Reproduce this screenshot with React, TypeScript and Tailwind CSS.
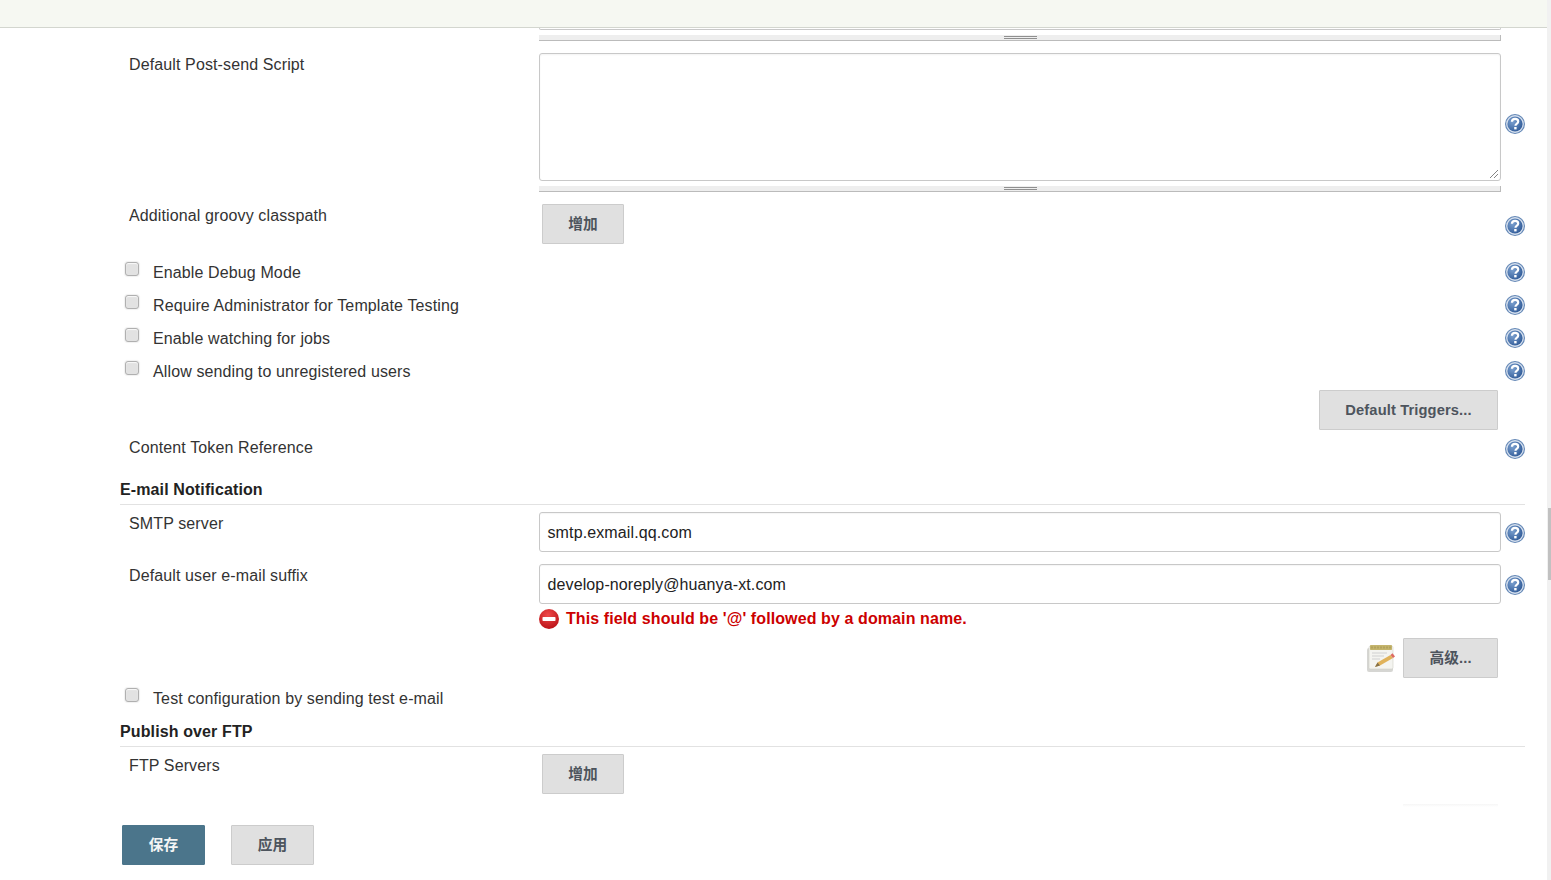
const fontStack = "font-['Liberation_Sans','Noto_Sans_CJK_SC',sans-serif]";

function HelpIcon({ className = "" }: { className?: string }) {
  return (
    <svg className={`h-5 w-5 shrink-0 ${className}`} viewBox="0 0 20 20">
      <defs>
        <radialGradient id="helpFill" cx="35%" cy="35%" r="75%">
          <stop offset="0%" stopColor="#7ba0cf" />
          <stop offset="100%" stopColor="#2d5896" />
        </radialGradient>
      </defs>
      <circle cx="10" cy="10" r="10" fill="#6387b6" />
      <circle cx="10" cy="10" r="8.900" fill="#d6e0ee" />
      <circle cx="10" cy="10" r="7.600" fill="url(#helpFill)" />
      <path
        d="M6.900 7.800c.1-1.900 1.400-3 3.200-3 1.800 0 3.100 1.100 3.100 2.600 0 1.300-.8 1.900-1.600 2.500-.7.500-1.100 1-1.100 1.900"
        fill="none"
        stroke="#ffffff"
        strokeWidth="2.200"
      />
      <rect x="9.200" y="13" width="2.400" height="2.400" fill="#ffffff" />
    </svg>
  );
}

function NotepadIcon() {
  return (
    <svg className="h-[30px] w-[30px] shrink-0" viewBox="0 0 30 30">
      <rect x="1" y="5" width="26" height="24" rx="2" fill="#c8c8c4" opacity="0.750" />
      <rect x="3" y="3" width="24" height="23" rx="1.500" fill="#f4f4f0" stroke="#d0d0c8" strokeWidth="0.600" />
      <rect x="4" y="2" width="22" height="5" rx="0.800" fill="#c4b46c" />
      <path d="M6 3.500v2M9 3.500v2M12 3.500v2M15 3.500v2M18 3.500v2M21 3.500v2M24 3.500v2" stroke="#9a8b4a" strokeWidth="0.800" />
      <path d="M6 10h15M6 13h12M6 16h8" stroke="#cfcfcf" strokeWidth="1.100" />
      <path d="M9 24l2.500-4.500L24.500 12l2.500 3L14 22.500z" fill="#e0b25a" />
      <path d="M24.500 12l2.500 3 2-1.600-2.500-3.200z" fill="#dd6a62" />
      <path d="M9 24l2.500-4.500 2.500 3z" fill="#85714a" />
    </svg>
  );
}

function ErrorIcon() {
  return (
    <svg className="h-5 w-5 shrink-0" viewBox="0 0 20 20">
      <defs>
        <radialGradient id="errFill" cx="45%" cy="30%" r="75%">
          <stop offset="0%" stopColor="#ef4a4a" />
          <stop offset="100%" stopColor="#b80f14" />
        </radialGradient>
      </defs>
      <circle cx="10" cy="10" r="10" fill="url(#errFill)" />
      <rect x="3.500" y="8" width="13" height="4" rx="0.800" fill="#ffffff" />
    </svg>
  );
}

function Button({ children, className = "" }: { children: React.ReactNode; className?: string }) {
  return (
    <button
      type="button"
      className={`h-10 rounded-[1px] border border-[#cccccc] bg-[#e0e0e0] pt-[1px] text-[14.7px] font-bold text-[#4d545d] ${className}`}
    >
      {children}
    </button>
  );
}

function ResizeHandle() {
  return (
    <div className="flex h-[6px] items-start justify-center border-r border-b border-[#bbbbbb] bg-[#eeeeee] pl-[2px] pt-[1px]">
      <div className="h-[3px] w-[33px] border-y border-[#8f8f8f]" />
    </div>
  );
}

function FieldRow({
  label,
  children,
  helpClass = "mt-[11px]",
}: {
  label: string;
  children: React.ReactNode;
  helpClass?: string;
}) {
  return (
    <div className="flex">
      <div className="w-[419px] shrink-0 pl-[9px] leading-[24px]">{label}</div>
      <div className="w-[962px] shrink-0">{children}</div>
      <div className="ml-1">
        <HelpIcon className={helpClass} />
      </div>
    </div>
  );
}

function CheckRow({ label, help = true }: { label: string; help?: boolean }) {
  return (
    <div className="flex h-[33px] items-start">
      <div className="ml-[5px] mt-[6px] h-[14px] w-[14px] shrink-0 rounded-[3px] border border-[#b0b0b0] bg-[#e2e2e2] shadow-[0_0_1px_1px_rgba(0,0,0,0.06),inset_0_1px_1px_rgba(255,255,255,0.8)]" />
      <span className="ml-[14px] mt-[5px] leading-[24px]">{label}</span>
      {help && <HelpIcon className="ml-auto mt-[6px]" />}
    </div>
  );
}

function SectionHeader({ title }: { title: string }) {
  return <div className="border-b border-[#e2e2e2] pb-[2px] font-bold leading-[24px] text-[#222222]">{title}</div>;
}

function TextField({ value }: { value: string }) {
  return (
    <div className="flex h-10 items-center rounded-[3px] border border-[#c8c8c8] pl-[7.500px] pt-[2px] text-[#222222] shadow-[inset_0_1px_1px_rgba(0,0,0,0.04)]">
      {value}
    </div>
  );
}

export default function App() {
  return (
    <div className={`flex h-[880px] w-full overflow-hidden bg-white text-[16px] tracking-[0.12px] text-[#333333] ${fontStack}`}>
      <main className="w-[1547px] shrink-0">
        <header className="h-[28px] border-b border-[#d3d6cf] bg-[#f6f8f2]" />

        <div className="pl-[120px] pr-[22px]">
          <div className="ml-[419px] h-[25px] w-[962px]">
            <div className="h-[2px] rounded-b-[3px] border-x border-b border-[#c8c8c8]" />
            <div className="mt-[5px]">
              <ResizeHandle />
            </div>
          </div>

          <FieldRow label="Default Post-send Script" helpClass="mt-[61px]">
            <div className="relative h-[128px] rounded-[3px] border border-[#c8c8c8] shadow-[inset_0_1px_2px_rgba(0,0,0,0.05)]">
              <svg className="absolute bottom-[2px] right-[2px] h-2 w-2" viewBox="0 0 8 8">
                <path d="M0 8L8 0M4 8L8 4" stroke="#666666" strokeWidth="0.800" />
              </svg>
            </div>
            <div className="mt-[5px]">
              <ResizeHandle />
            </div>
          </FieldRow>

          <div className="mt-3">
            <FieldRow label="Additional groovy classpath" helpClass="mt-3">
              <Button className="ml-[3px] w-[82px]">增加</Button>
            </FieldRow>
          </div>

          <div className="mt-3">
            <CheckRow label="Enable Debug Mode" />
            <CheckRow label="Require Administrator for Template Testing" />
            <CheckRow label="Enable watching for jobs" />
            <CheckRow label="Allow sending to unregistered users" />
          </div>

          <div className="mt-[2px] flex justify-end pr-[27px]">
            <Button className="w-[179px]">Default Triggers...</Button>
          </div>

          <div className="mt-[6px] flex h-[24px] items-start justify-between">
            <span className="pl-[9px] leading-[24px]">Content Token Reference</span>
            <HelpIcon className="mt-[3px]" />
          </div>

          <div className="mt-[18px]">
            <SectionHeader title="E-mail Notification" />
          </div>

          <div className="mt-[7px]">
            <FieldRow label="SMTP server">
              <TextField value="smtp.exmail.qq.com" />
            </FieldRow>
          </div>

          <div className="mt-3">
            <FieldRow label="Default user e-mail suffix">
              <TextField value="develop-noreply@huanya-xt.com" />
            </FieldRow>
          </div>

          <div className="ml-[419px] mt-[3px] flex h-[24px] items-center gap-[7px] font-bold leading-[24px] tracking-[0.1px] text-[#cc0000]">
            <ErrorIcon />
            <span>This field should be '@' followed by a domain name.</span>
          </div>

          <div className="mt-[7px] flex items-center justify-end gap-[7px] pr-[27px]">
            <NotepadIcon />
            <Button className="w-[95px]">高级...</Button>
          </div>

          <div className="mt-1">
            <CheckRow label="Test configuration by sending test e-mail" help={false} />
          </div>

          <div className="mt-[5px]">
            <SectionHeader title="Publish over FTP" />
          </div>

          <div className="mt-[7px] flex">
            <div className="w-[419px] shrink-0 pl-[9px] leading-[24px]">FTP Servers</div>
            <Button className="ml-[3px] w-[82px]">增加</Button>
          </div>

          <div className="mt-[10px] flex justify-end pr-[27px]">
            <div className="h-[3px] w-[95px] bg-gradient-to-b from-[#f6f6f6] to-white" />
          </div>

          <div className="mt-[18px] flex gap-[26px] pl-[2px]">
            <button
              type="button"
              className="h-10 w-[83px] rounded-[1px] border border-[#4b758b] bg-[#4b758b] pt-[1px] text-[14.7px] font-bold text-[#f5f5f5]"
            >
              保存
            </button>
            <Button className="w-[83px]">应用</Button>
          </div>
        </div>
      </main>

      <div className="w-1 shrink-0 bg-[#f1f1f1]">
        <div className="ml-[1px] mt-[508px] h-[72px] bg-[#c1c1c1]" />
      </div>
    </div>
  );
}
